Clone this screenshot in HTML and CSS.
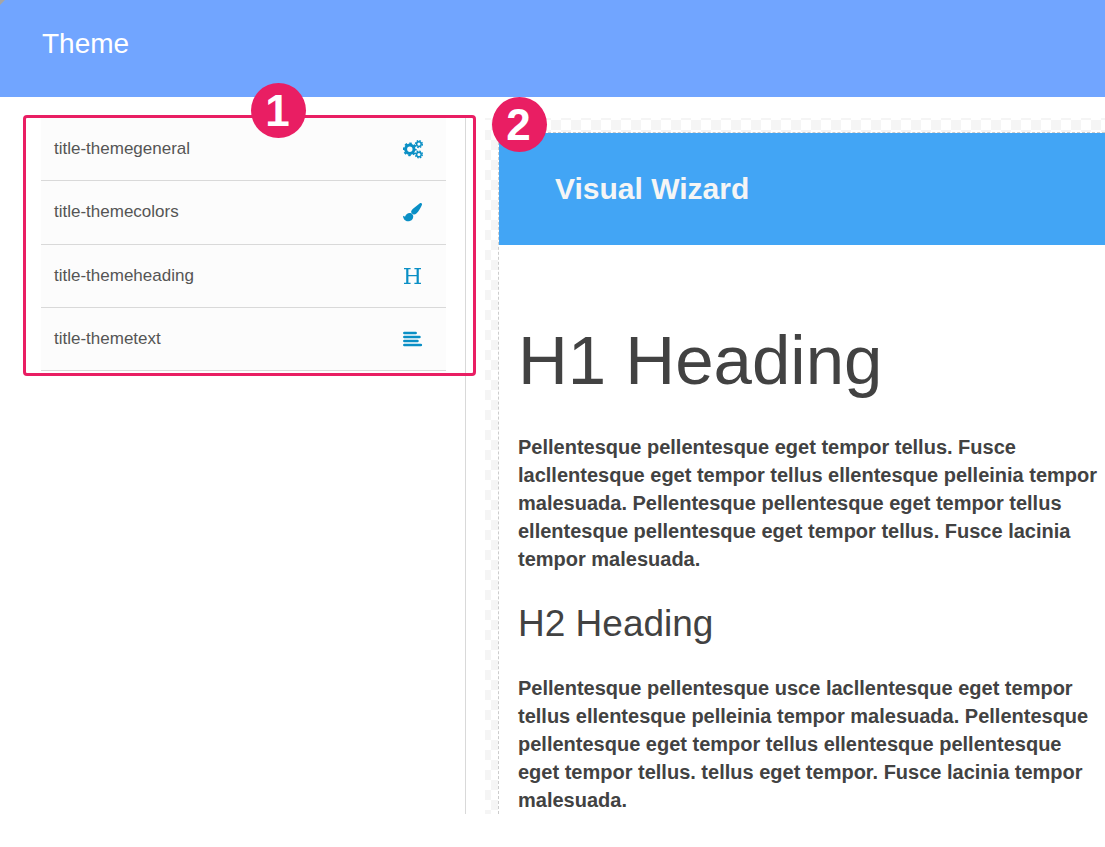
FILE: index.html
```html
<!DOCTYPE html>
<html lang="en">
<head>
<meta charset="utf-8">
<meta name="viewport" content="width=device-width, initial-scale=1">
<title>Theme</title>
<link rel="stylesheet" href="styles.css">
</head>
<body>
<header class="topbar"><h1 class="topbar-title">Theme</h1></header>
<main class="workspace">
  <aside class="sidebar">
    <nav class="menu" aria-label="Theme sections">
      <button class="menu-item" type="button">
        <span>title-themegeneral</span>
        <svg class="icon" viewBox="0 0 20 20" aria-hidden="true">
          <g fill="none" stroke="currentColor">
            <circle cx="6.8" cy="10.3" r="4.2" stroke-width="3"/>
            <circle cx="6.8" cy="10.3" r="6" stroke-width="1.8" stroke-dasharray="2.5 2.21" stroke-dashoffset="1.2"/>
            <circle cx="15.9" cy="5.1" r="2.3" stroke-width="1.5"/>
            <circle cx="15.9" cy="5.1" r="3.4" stroke-width="1.4" stroke-dasharray="1.6 1.07"/>
            <circle cx="15.9" cy="15.5" r="2.3" stroke-width="1.5"/>
            <circle cx="15.9" cy="15.5" r="3.4" stroke-width="1.4" stroke-dasharray="1.6 1.07"/>
          </g>
        </svg>
      </button>
      <button class="menu-item" type="button">
        <span>title-themecolors</span>
        <svg class="icon" viewBox="0 0 20 20" aria-hidden="true">
          <path fill="currentColor" d="M17.2 1c1.400-.4 2.200.7 1.700 2-1.300 3.100-3.100 6.200-5.500 8.500-.9.9-1.900 1.200-2.900 1-1.200-.5-2.200-1.500-2.400-2.800.2-1.100.8-2 1.600-2.800zM7.300 11c1.200.2 2.600 1.400 2.900 2.700.4 3.300-1.900 5.500-5.200 5.500-3.100 0-4.800-2.400-5-5.500.9.5 1.500 1 2.100.7.9-2.300 2.800-3.700 5.200-3.400z"/>
        </svg>
      </button>
      <button class="menu-item" type="button">
        <span>title-themeheading</span>
        <svg class="icon" viewBox="0 0 20 20" aria-hidden="true">
          <path fill="none" stroke="currentColor" stroke-width="2.200" d="M4.300 3v14M14.700 3v14"/>
          <path fill="none" stroke="currentColor" stroke-width="1.300" d="M1 2.700h6.600M11.400 2.700H18M1 17.300h6.600M11.400 17.300H18M4.500 9.700h10"/>
        </svg>
      </button>
      <button class="menu-item" type="button">
        <span>title-themetext</span>
        <svg class="icon" viewBox="0 0 20 20" aria-hidden="true">
          <path fill="none" stroke="currentColor" stroke-width="2.700" stroke-linecap="round" d="M1.400 4h11.200M1.400 8h15M1.400 12h13M1.400 16h16.400"/>
        </svg>
      </button>
    </nav>
    <div class="callout"></div>
    <span class="badge badge-one">1</span>
  </aside>
  <section class="preview">
    <span class="badge badge-two">2</span>
    <div class="page">
      <div class="hero"><h2 class="hero-title">Visual Wizard</h2></div>
      <article class="content">
        <h1 class="heading-one">H1 Heading</h1>
        <p class="text">Pellentesque pellentesque eget tempor tellus. Fusce lacllentesque eget tempor tellus ellentesque pelleinia tempor malesuada. Pellentesque pellentesque eget tempor tellus ellentesque pellentesque eget tempor tellus. Fusce lacinia tempor malesuada.</p>
        <h2 class="heading-two">H2 Heading</h2>
        <p class="text">Pellentesque pellentesque usce lacllentesque eget tempor tellus ellentesque pelleinia tempor malesuada. Pellentesque pellentesque eget tempor tellus ellentesque pellentesque eget tempor tellus. tellus eget tempor. Fusce lacinia tempor malesuada.</p>
      </article>
    </div>
  </section>
</main>
</body>
</html>
```
FILE: styles.css
```css
* { box-sizing: border-box; }
body {
  margin: 0;
  background: #fff;
  color: #424242;
  font-family: "Liberation Sans", Arial, sans-serif;
}
h1, h2, p { margin: 0; }
.topbar {
  padding: 28px 42px 37px;
  background: linear-gradient(135deg, #a5a5a5 3px, #71a5ff 4px);
  color: #fff;
}
.topbar-title { font-size: 28px; line-height: 32px; font-weight: 400; }
.workspace { display: flex; padding: 21px 0 34px; }
.sidebar {
  position: relative;
  flex: 0 0 466px;
  padding: 0 19px 0 41px;
  border-right: 1px solid #d9d9d9;
}
.menu { display: grid; grid-auto-rows: 1fr; min-height: 253px; }
.menu-item {
  display: flex;
  align-items: center;
  justify-content: space-between;
  padding: 0 23px 0 13px;
  border: 0;
  border-bottom: 1px solid #d9d9d9;
  background: #fcfcfc;
  color: #555;
  font: 17px "Liberation Sans", Arial, sans-serif;
  text-align: left;
}
.icon { width: 20px; height: 20px; color: #0a8fc5; }
.callout {
  position: absolute;
  inset: -3px -11px auto 23px;
  height: 261px;
  border: 3px solid #e91e63;
  border-radius: 4px;
}
.badge {
  position: absolute;
  width: 55px;
  height: 55px;
  padding-right: 2px;
  border-radius: 50%;
  background: #e91e63;
  color: #fff;
  font-size: 44px;
  line-height: 55px;
  font-weight: 700;
  text-align: center;
}
.badge-one { top: -35px; left: 251px; }
.badge-two { top: -21px; left: 7px; }
.preview {
  position: relative;
  flex: 1;
  min-width: 0;
  margin-left: 19px;
  padding: 14px 0 0 13px;
  background: conic-gradient(#f5f5f5 25%, #fff 0 50%, #f5f5f5 0 75%, #fff 0) -4px 2px / 20px 20px content-box;
  background-clip: border-box;
  background-origin: border-box;
}
.page {
  min-height: 100%;
  border: 1px dashed #ccc;
  border-width: 1px 0 0 1px;
  background: #fff;
}
.hero { padding: 38px 56px; background: #42a5f5; }
.hero-title { color: #f5f5f5; font-size: 30px; line-height: 36px; }
.content { padding: 72px 4px 0 19px; }
.heading-one { font-size: 69px; line-height: 88px; font-weight: 400; }
.heading-two { margin-top: 29px; font-size: 37px; line-height: 44px; font-weight: 400; }
.text { margin-top: 28px; font-size: 20px; line-height: 28px; font-weight: 700; }
```
